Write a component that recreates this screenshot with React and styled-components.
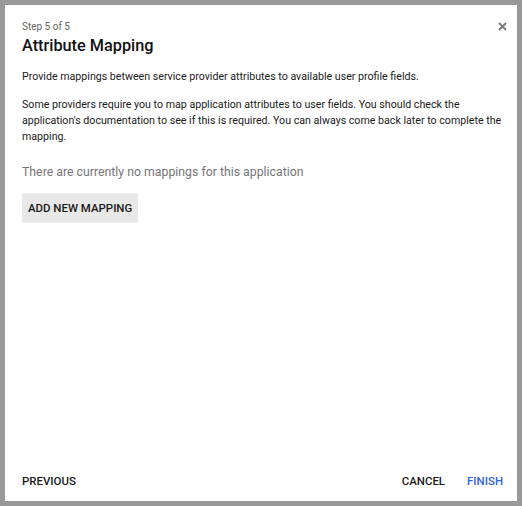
import React from "react";
import styled, { createGlobalStyle } from "styled-components";

const Global = createGlobalStyle`
  html, body { margin: 0; padding: 0; background: #999999; }
  body { font-family: Roboto, "Noto Sans", sans-serif; }
  * { box-sizing: border-box; }
`;

const Frame = styled.div`
  padding: 5px;
  width: 522px;
  height: 506px;
`;

const Dialog = styled.div`
  position: relative;
  background: #ffffff;
  width: 512px;
  height: 496px;
  display: flex;
  flex-direction: column;
`;

const Body = styled.div`
  flex: 1;
  padding: 15px 12px 0 17px;
  display: flex;
  flex-direction: column;
  align-items: flex-start;
`;

const Step = styled.div`
  font-size: 10px;
  line-height: 14px;
  color: #666666;
`;

const Title = styled.h2`
  margin: 2px 0 0 0;
  font-size: 16.3px;
  line-height: 20px;
  font-weight: 500;
  color: #111111;
`;

const Para = styled.p`
  margin: ${(p) => p.$top}px 0 0 0;
  font-size: 10.65px;
  line-height: 16px;
  color: #1a1a1a;
`;

const Empty = styled.div`
  margin-top: 18px;
  font-size: 12.3px;
  line-height: 18px;
  color: #757575;
`;

const GreyButton = styled.button`
  margin-top: 12px;
  border: none;
  border-radius: 2px;
  background: #e8e8e8;
  color: #1a1a1a;
  font-family: inherit;
  font-size: 11.45px;
  font-weight: 500;
  height: 30px;
  padding: 0 6px;
  text-transform: uppercase;
`;

const Close = styled.button`
  position: absolute;
  top: 13px;
  right: 7px;
  width: 16px;
  height: 16px;
  border: none;
  background: transparent;
  padding: 0;
  display: flex;
  align-items: center;
  justify-content: center;
`;

const Footer = styled.div`
  display: flex;
  align-items: center;
  height: 40px;
  padding: 0 14px 0 17px;
  gap: 22px;
`;

const Spacer = styled.div`
  flex: 1;
`;

const TextButton = styled.button`
  border: none;
  background: transparent;
  font-family: inherit;
  font-size: 11.45px;
  font-weight: 500;
  padding: 0;
  color: ${(p) => (p.$primary ? "#2f67d8" : "#1a1a1a")};
  text-transform: uppercase;
`;

export default function App() {
  return (
    <>
      <Global />
      <Frame>
        <Dialog>
          <Close aria-label="close">
            <svg width="9" height="9" viewBox="0 0 9 9">
              <path d="M1 1 L8 8 M8 1 L1 8" stroke="#7a7a7a" strokeWidth="1.8" />
            </svg>
          </Close>
          <Body>
            <Step>Step 5 of 5</Step>
            <Title>Attribute Mapping</Title>
            <Para $top={13}>
              Provide mappings between service provider attributes to available user profile fields.
            </Para>
            <Para $top={12}>
              Some providers require you to map application attributes to user fields. You should check the
              application's documentation to see if this is required. You can always come back later to complete the
              mapping.
            </Para>
            <Empty>There are currently no mappings for this application</Empty>
            <GreyButton>Add New Mapping</GreyButton>
          </Body>
          <Footer>
            <TextButton>Previous</TextButton>
            <Spacer />
            <TextButton>Cancel</TextButton>
            <TextButton $primary>Finish</TextButton>
          </Footer>
        </Dialog>
      </Frame>
    </>
  );
}
